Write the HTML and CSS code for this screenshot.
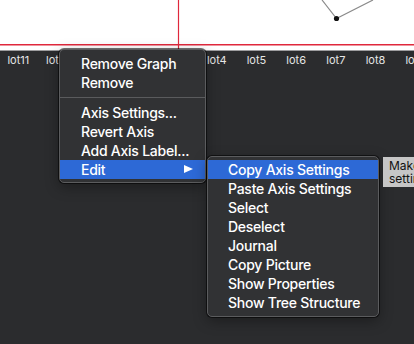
FILE: index.html
```html
<!DOCTYPE html>
<html lang="en">
  <head>
    <meta charset="UTF-8" />
    <title>Graph context menu</title>
    <link rel="stylesheet" href="styles.css">
  </head>
  <body>
    <div class="plot">
      <svg width="414" height="50" viewBox="0 0 414 50">
        <polyline points="322,0 336.5,18.5 373,0" fill="none" stroke="#8a8a8a" stroke-width="1.2" />
        <circle cx="336.5" cy="18.5" r="2.6" fill="#111" />
        <line x1="178.5" y1="0" x2="178.5" y2="50" stroke="#e0283c" stroke-width="1.2" />
        <line x1="0" y1="44.8" x2="414" y2="44.8" stroke="#e0283c" stroke-width="1.6" />
      </svg>
    </div>
    <div class="axis-labels">
      <span class="tick">lot11</span>
      <span class="tick">lot12</span>
      <span class="tick">lot1</span>
      <span class="tick">lot2</span>
      <span class="tick">lot3</span>
      <span class="tick">lot4</span>
      <span class="tick">lot5</span>
      <span class="tick">lot6</span>
      <span class="tick">lot7</span>
      <span class="tick">lot8</span>
      <span class="tick">lot9</span>
    </div>

    <div class="menu main-menu">
      <div class="menu-item">Remove Graph</div>
      <div class="menu-item">Remove</div>
      <div class="menu-sep"></div>
      <div class="menu-item">Axis Settings...</div>
      <div class="menu-item">Revert Axis</div>
      <div class="menu-item">Add Axis Label...</div>
      <div class="menu-item active">Edit <span class="arrow"></span></div>
    </div>

    <div class="menu sub-menu">
      <div class="menu-item active">Copy Axis Settings</div>
      <div class="menu-item">Paste Axis Settings</div>
      <div class="menu-item">Select</div>
      <div class="menu-item">Deselect</div>
      <div class="menu-item">Journal</div>
      <div class="menu-item">Copy Picture</div>
      <div class="menu-item">Show Properties</div>
      <div class="menu-item">Show Tree Structure</div>
    </div>

    <div class="tooltip">Make a copy of the axis<br />settings</div>
  </body>
</html>
```

FILE: styles.css
```css
body {
  margin: 0;
  padding: 0;
  width: 414px;
  height: 344px;
  overflow: hidden;
  position: relative;
  background-color: #2b2c2e;
  font-family: "Inter", "Liberation Sans", sans-serif;
}
.plot {
  height: 50px;
  background-color: #fff;
  border-bottom: 1px solid #9d9d9f;
}
.plot svg {
  display: block;
}
.axis-labels {
  display: flex;
  margin-left: -1.5px;
  height: 18px;
  line-height: 18px;
}
.tick {
  flex: 0 0 39.7px;
  text-align: center;
  font-size: 11px;
  color: #e6e6e6;
}
.menu {
  position: absolute;
  background-color: #313234;
  border: 1px solid #5b5c5e;
  border-radius: 5px;
  box-shadow: 0 0 0 1px rgba(0, 0, 0, 0.55), 0 4px 14px rgba(0, 0, 0, 0.35);
  box-sizing: border-box;
}
.main-menu {
  left: 59px;
  top: 49px;
  width: 147px;
  height: 134px;
  padding-top: 4px;
}
.sub-menu {
  left: 207px;
  top: 156px;
  width: 172px;
  height: 161px;
  padding-top: 3px;
}
.menu-item {
  position: relative;
  height: 19px;
  line-height: 19px;
  padding-left: 21px;
  font-size: 14px;
  font-weight: 500;
  letter-spacing: -0.25px;
  color: #fff;
  white-space: nowrap;
}
.sub-menu .menu-item {
  padding-left: 20px;
}
.menu-item.active {
  background-color: #2d69d6;
}
.menu-sep {
  height: 11px;
  display: flex;
  align-items: center;
}
.menu-sep::before {
  content: "";
  flex: 1;
  height: 1px;
  background-color: #5a5b5d;
}
.arrow {
  position: absolute;
  right: 12px;
  top: 5px;
  width: 0;
  height: 0;
  border-top: 4.5px solid transparent;
  border-bottom: 4.5px solid transparent;
  border-left: 9px solid #fff;
}
.tooltip {
  position: absolute;
  left: 383px;
  top: 157px;
  width: 140px;
  height: 30px;
  box-sizing: border-box;
  padding: 2px 0 0 6px;
  background-color: #c6c6c6;
  color: #111;
  font-size: 12px;
  line-height: 13px;
  white-space: nowrap;
}
```
